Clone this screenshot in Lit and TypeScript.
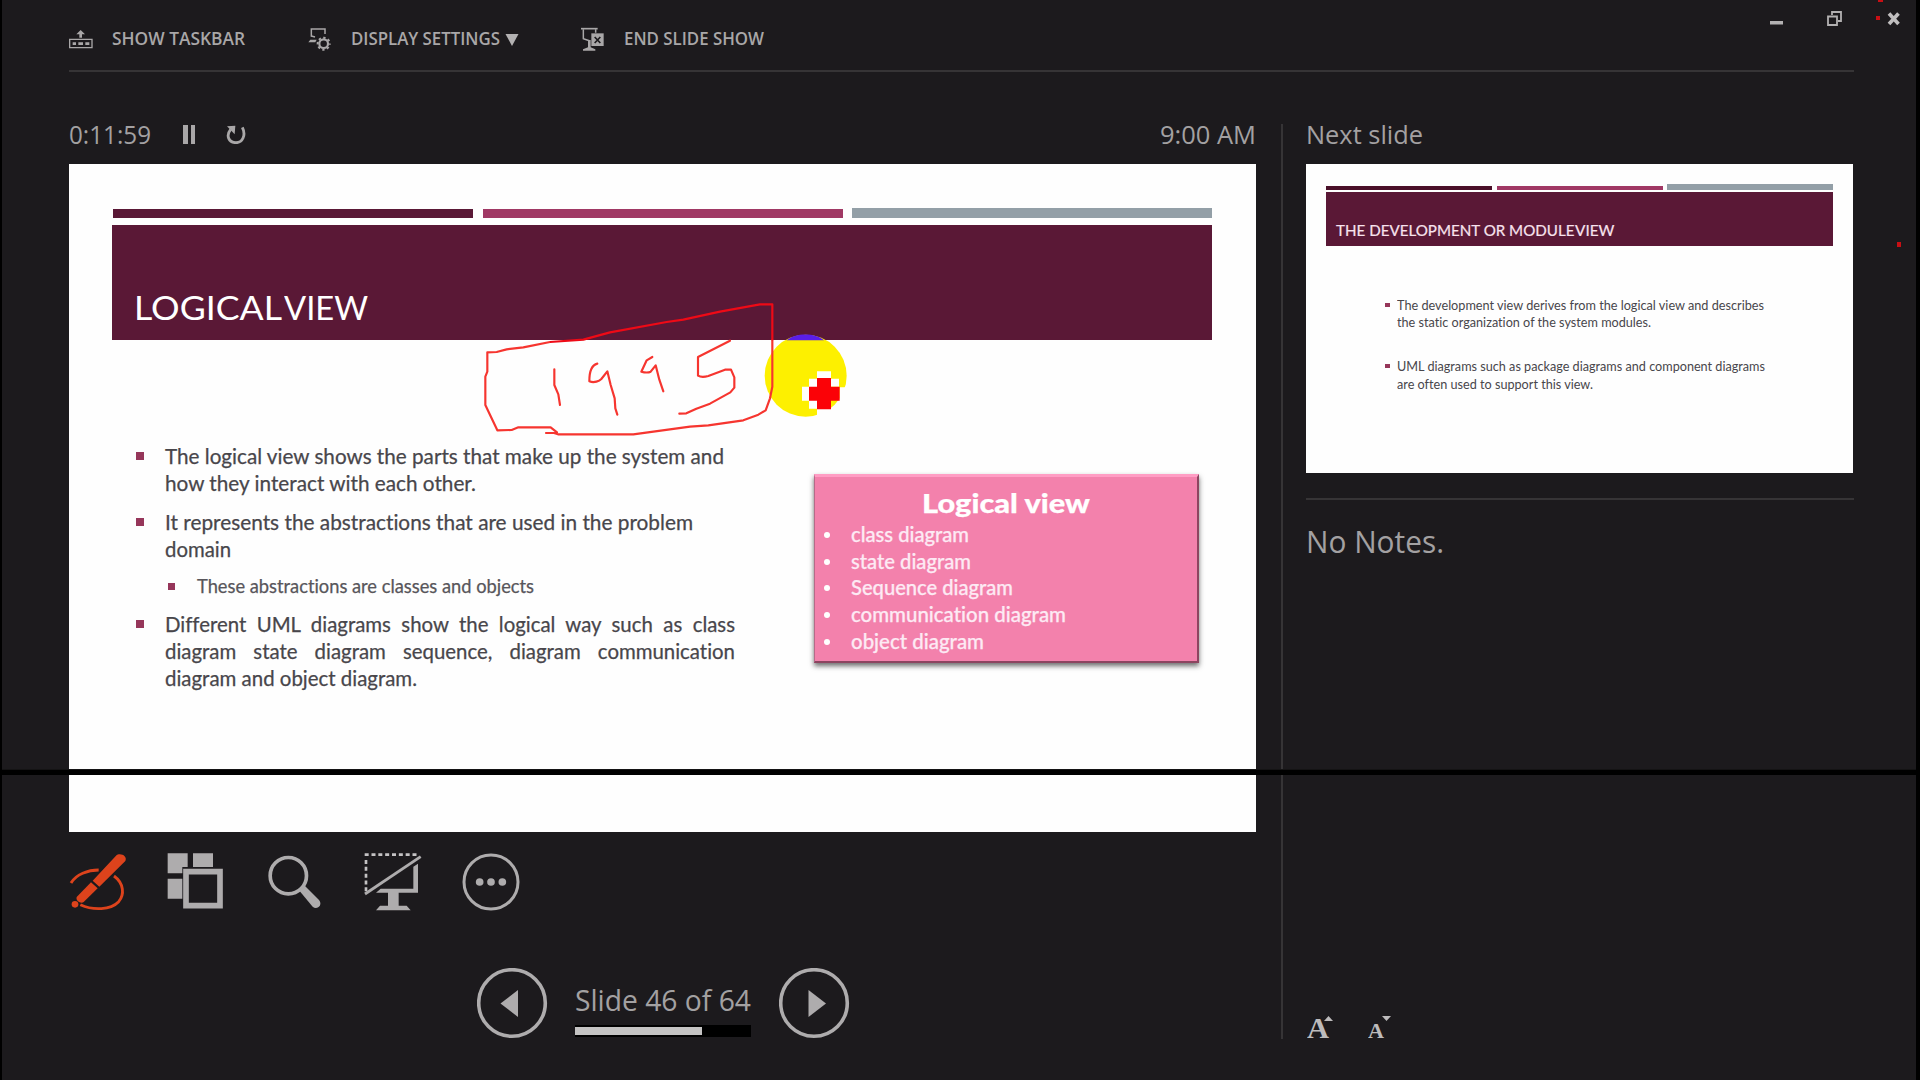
import { LitElement, html, css, svg } from "lit";
import { customElement, property } from "lit/decorators.js";

/** One line of text, stretched horizontally so that it fills its width. */
@customElement("fit-text")
class FitText extends LitElement {
  @property() text = "";
  @property({ type: Number }) width = 100;
  /** When set, glyphs keep this scale and the word gaps take up the rest. */
  @property({ type: Number }) glyph = 0;

  static styles = css`
    :host {
      display: block;
      flex: none;
      white-space: nowrap;
      font-variant-ligatures: none;
    }
    .run {
      display: inline-block;
      transform-origin: 0 50%;
      vertical-align: top;
    }
  `;

  updated() {
    const run = this.renderRoot.querySelector(".run") as HTMLElement;
    this.style.width = `${this.width}px`;
    run.style.transform = "none";
    run.style.wordSpacing = "0";
    const natural = run.getBoundingClientRect().width;
    if (this.glyph) {
      const gaps = this.text.split(" ").length - 1;
      run.style.wordSpacing = `${(this.width / this.glyph - natural) / gaps}px`;
      run.style.transform = `scaleX(${this.glyph})`;
    } else {
      run.style.transform = `scaleX(${this.width / natural})`;
    }
  }

  render() {
    return html`<span class="run">${this.text}</span>`;
  }
}

const line = (text: string, width: number, cls = "", glyph = 0) =>
  html`<fit-text class=${cls} .text=${text} .width=${width} .glyph=${glyph}></fit-text>`;

const icons = {
  taskbar: svg`
    <path d="M29 58H96V83H29Z" fill="none" stroke="#a9a7a8" stroke-width="4"/>
    <path d="M38 67h10v8h-10zM55 67h14v8h-14zM76 67h12v8h-12z" fill="#a9a7a8"/>
    <path d="M62 30L75 43H66V53H58V43H49Z" fill="#a9a7a8"/>`,
  display: svg`
    <path d="M31 50V27H72V42" fill="none" stroke="#a9a7a8" stroke-width="4.5"/>
    <path d="M31 48L42 51" stroke="#a9a7a8" stroke-width="4"/>
    <path d="M28 59H47L43 67H22Z" fill="#a9a7a8"/>
    <circle cx="68" cy="71" r="13" fill="none" stroke="#a9a7a8" stroke-width="6.5"/>
    <circle cx="68" cy="71" r="18" fill="none" stroke="#a9a7a8" stroke-width="6" stroke-dasharray="7 7.14" stroke-dashoffset="3.5"/>`,
  end: svg`
    <path d="M843 26H893" stroke="#a9a7a8" stroke-width="5"/>
    <path d="M850 28V56L868 62M887 28V38" fill="none" stroke="#a9a7a8" stroke-width="4.5"/>
    <path d="M864 60H872V82L886 88V92H849V88L864 82Z" fill="#a9a7a8"/>
    <path d="M874 40H911V78H874Z" fill="#a9a7a8"/>
    <path d="M884 51L901 69M901 51L884 69" stroke="#1c1a1d" stroke-width="5"/>`,
  reload: svg`
    <path d="M549 322C561 346 549 368 530 368C508 368 499 347 514 328" fill="none" stroke="#a9a7a8" stroke-width="8.5"/>
    <path d="M503 319L528 317L526 343Z" fill="#a9a7a8"/>`,
  pen: svg`
    <path d="M93 369C108 343 144 330 176 330M222 348C252 370 254 404 236 425C212 450 160 452 121 434" fill="none" stroke="#dd431c" stroke-width="8.5"/>
    <path d="M228 287C238 276 264 286 256 303L178 380L158 362Z" fill="#dd431c"/>
    <path d="M153 367L173 385L131 426C124 432 106 424 110 411Z" fill="#dd431c"/>
    <circle cx="105" cy="433" r="10" fill="#dd431c"/>`,
  grid: svg`
    <path d="M383 280H443V321H427V340H383ZM459 280H519V321H459ZM383 356H427V416H383Z" fill="#aeacad"/>
    <path d="M438 335H540V437H438Z" fill="none" stroke="#aeacad" stroke-width="17"/>`,
  zoom: svg`
    <circle cx="745" cy="347" r="54.5" fill="none" stroke="#aeacad" stroke-width="11"/>
    <path d="M777 391L792 375L837 420C850 436 830 451 818 440Z" fill="#aeacad"/>`,
  screen: svg`
    <path d="M974 284H1132" stroke="#c4c2c3" stroke-width="8" stroke-dasharray="12 8.5"/>
    <path d="M978 300V396" stroke="#c4c2c3" stroke-width="8" stroke-dasharray="12 8.5"/>
    <path d="M975 402L1142 290" stroke="#aeacad" stroke-width="8.5"/>
    <path d="M1120 320L1134 311V398H1076V437H1100L1112 451H1008L1020 437H1044V398H1008L1022 386H1120Z" fill="#aeacad"/>`,
  more: svg`
    <circle cx="1353" cy="366" r="81" fill="none" stroke="#aeacad" stroke-width="9"/>
    <circle cx="1319" cy="366" r="11.5" fill="#aeacad"/><circle cx="1353" cy="366" r="11.5" fill="#aeacad"/><circle cx="1387" cy="366" r="11.5" fill="#aeacad"/>`,
};

const icon = (shape: unknown, cls: string, box: string) =>
  html`<svg class=${cls} viewBox=${box}>${shape}</svg>`;

@customElement("app-root")
class AppRoot extends LitElement {
  static styles = css`
    :host {
      display: block;
      width: 1920px;
      height: 1080px;
      overflow: hidden;
    }
    * {
      box-sizing: border-box;
    }
    svg {
      display: block;
      flex: none;
    }
    .app {
      position: relative;
      width: 1920px;
      height: 1080px;
      background: #1c1a1d;
      border-left: 2px solid #000;
      border-right: 4px solid #000;
      padding-left: 67px;
      font-family: "Open Sans", "Noto Sans", sans-serif;
      color: #a3a1a2;
      overflow: hidden;
    }
    .header {
      display: flex;
      justify-content: space-between;
      height: 70px;
    }
    .commands {
      display: flex;
      padding-top: 26px;
      height: 53px;
    }
    .command {
      display: flex;
      font-size: 18px;
      font-weight: 600;
      line-height: 25px;
      color: #a9a7a8;
    }
    .c-icon {
      width: 24px;
      height: 24px;
      margin-top: 1px;
    }
    .c-text {
      margin-left: 19px;
    }
    .command + .command {
      margin-left: 63px;
    }
    .command.last {
      margin-left: 62px;
    }
    .caret {
      width: 14px;
      height: 12px;
      margin: 8px 0 0 5px;
    }
    .window {
      display: flex;
      width: 146px;
      height: 40px;
    }
    .win-icons {
      width: 146px;
      height: 40px;
    }
    .rule {
      height: 2px;
      width: 1785px;
      background: #363436;
    }
    .main {
      display: flex;
      height: 1008px;
      padding-top: 44px;
    }
    .left {
      width: 1187px;
    }
    .status {
      display: flex;
      height: 36px;
      line-height: 36px;
      font-size: 26px;
    }
    .pause {
      display: flex;
      gap: 3px;
      margin: 9px 0 0 32px;
      width: 12px;
      height: 19px;
    }
    .pause i {
      width: 4.5px;
      background: #a9a7a8;
    }
    .reload {
      width: 20px;
      height: 20px;
      margin: 8px 0 0 31px;
    }
    .clock {
      margin-left: auto;
    }
    .slide {
      margin-top: 12px;
      width: 1187px;
      height: 668px;
      padding: 44px 44px 0 43px;
      background: #fefefe;
      font-family: Lato, sans-serif;
      color: #48464b;
    }
    .bars {
      display: grid;
      grid-template-columns: 360px 360px 360px;
      column-gap: 9.5px;
      padding-left: 1px;
      align-items: end;
      height: 10px;
    }
    .bar {
      height: 9px;
    }
    .b1 {
      background: #5a1836;
    }
    .b2 {
      background: #a03864;
    }
    .b3 {
      height: 10px;
      background: #939fa7;
    }
    .banner {
      display: flex;
      margin-top: 7px;
      height: 115px;
      padding: 62px 0 0 22px;
      background: #5a1836;
      color: #fff;
      font-size: 33px;
      line-height: 40px;
    }
    .view {
      margin-left: 2px;
    }
    .content {
      display: flex;
    }
    .points {
      padding: 103px 0 0 24px;
      width: 702px;
      font-size: 20.6px;
      line-height: 26.8px;
      -webkit-text-stroke: 0.25px currentColor;
    }
    .point {
      display: grid;
      grid-template-columns: 29px 1fr;
      margin-bottom: 12.6px;
    }
    .point::before {
      content: "";
      width: 8px;
      height: 8px;
      margin-top: 9px;
      background: #96365a;
    }
    .point.sub {
      margin: -2.4px 0 11.4px 32px;
      font-size: 18.6px;
      color: #58565b;
    }
    .point.sub::before {
      width: 7px;
      height: 7px;
      margin-top: 10px;
    }
    .card {
      margin-top: 134px;
      width: 385px;
      height: 189px;
      padding: 11px 0 0 9px;
      background: #f381ac;
      color: #fdeaf4;
      border-top: 3px solid #ff9dc4;
      border-bottom: 2px solid #8c4560;
      border-right: 2px solid #8c4560;
      border-left: 1px solid #b76a88;
      box-shadow: 0 3px 5px rgba(30, 30, 30, 0.65);
      font-size: 20.4px;
      font-weight: 500;
      line-height: 26.8px;
      -webkit-text-stroke: 0.25px currentColor;
    }
    .card-title {
      margin: 0 0 2.8px 98px;
      color: #fff;
      font-size: 27px;
      font-weight: 900;
      line-height: 30px;
    }
    .item {
      display: flex;
    }
    .item::before {
      content: "";
      width: 6px;
      height: 6px;
      margin: 11px 21px 0 0;
      border-radius: 50%;
      background: #fff;
    }
    .tools {
      display: flex;
      gap: 38px;
      margin-top: 20px;
    }
    .tool {
      width: 60px;
      height: 60px;
    }
    .nav {
      display: flex;
      padding: 56px 0 0 408px;
    }
    .round {
      width: 72px;
      height: 72px;
    }
    .pager {
      width: 176px;
      margin: 13px 28px 0 26px;
      font-size: 28.5px;
      line-height: 38px;
    }
    .track {
      display: flex;
      align-items: center;
      height: 12px;
      margin-top: 6px;
      background: #000;
    }
    .fill {
      height: 8px;
      background: #c4c3c3;
    }
    .divider {
      width: 2px;
      height: 915px;
      margin: 8px 23px 0 25px;
      background: #363436;
    }
    .right {
      width: 548px;
    }
    .thumb {
      margin-top: 12px;
      width: 547px;
      height: 309px;
      padding: 20px 20px 0 20px;
      background: #fefefe;
      font-family: Lato, sans-serif;
      font-size: 14px;
      line-height: 17.2px;
      color: #48464b;
    }
    .thumb .bars {
      grid-template-columns: 166px 166px 166px;
      column-gap: 4.5px;
      padding: 0;
      height: 6px;
    }
    .thumb .bar {
      height: 4px;
    }
    .thumb .b1 {
      background: #4a1029;
    }
    .thumb .b3 {
      height: 6px;
    }
    .thumb .banner {
      margin-top: 2px;
      height: 54px;
      padding: 28px 0 0 10px;
      font-size: 16px;
      line-height: 20px;
      color: #f8e3ee;
      -webkit-text-stroke: 0.2px currentColor;
    }
    .thumb .view {
      margin-left: 0;
    }
    .thumb .point {
      grid-template-columns: 12px 1fr;
      margin: 0 0 27.4px 59px;
    }
    .thumb .point::before {
      width: 5px;
      height: 4px;
      margin-top: 7px;
    }
    .thumb .first {
      padding-top: 49.5px;
    }
    .note-rule {
      margin-top: 25px;
      height: 2px;
      background: #363436;
    }
    .notes {
      margin: 21px 0 0 0;
      font-size: 31px;
      line-height: 40px;
    }
    .sizes {
      display: flex;
      margin-top: 449px;
      padding-left: 1px;
      font-family: "Liberation Serif", serif;
      font-weight: 700;
      color: #bdbbbc;
      line-height: 36px;
    }
    .big {
      font-size: 30px;
    }
    .small {
      font-size: 22px;
      padding-top: 3px;
      margin-left: 35px;
    }
    .tri {
      width: 9px;
      height: 5px;
      margin: 6px 0 0 -5px;
    }
    .small-tri {
      margin-left: -2px;
    }
    .seam {
      position: absolute;
      left: -2px;
      top: 769px;
      width: 1920px;
      height: 6px;
      background: #000;
      border-top: 1px solid #141314;
    }
    .ink {
      position: absolute;
      left: 458px;
      top: 280px;
      width: 420px;
      height: 180px;
    }
    .specks {
      position: absolute;
      left: 1868px;
      top: 0;
      width: 40px;
      height: 260px;
    }
  `;

  private slide() {
    return html`<div class="slide">
      <div class="bars"><div class="bar b1"></div><div class="bar b2"></div><div class="bar b3"></div></div>
      <div class="banner">${line("LOGICAL", 148)}${line("VIEW", 84, "view")}</div>
      <div class="content">
        <div class="points">
          <div class="point"><div>
            ${line("The logical view shows the parts that make up the system and", 559)}
            ${line("how they interact with each other.", 311)}
          </div></div>
          <div class="point"><div>
            ${line("It represents the abstractions that are used in the problem", 528)}
            ${line("domain", 66)}
          </div></div>
          <div class="point sub"><div>${line("These abstractions are classes and objects", 337)}</div></div>
          <div class="point"><div>
            ${line("Different UML diagrams show the logical way such as class", 570, "", 0.99)}
            ${line("diagram state diagram sequence, diagram communication", 570, "", 0.99)}
            ${line("diagram and object diagram.", 252)}
          </div></div>
        </div>
        <div class="card">
          ${line("Logical view", 168, "card-title")}
          ${[
            ["class diagram", 118],
            ["state diagram", 120],
            ["Sequence diagram", 162],
            ["communication diagram", 215],
            ["object diagram", 133],
          ].map(([t, w]) => html`<div class="item">${line(t as string, w as number)}</div>`)}
        </div>
      </div>
    </div>`;
  }

  private nextSlide() {
    return html`<div class="thumb">
      <div class="bars"><div class="bar b1"></div><div class="bar b2"></div><div class="bar b3"></div></div>
      <div class="banner">${line("THE DEVELOPMENT OR MODULE", 238.5)}${line("VIEW", 39.5, "view")}</div>
      <div class="first">
        <div class="point"><div>
          ${line("The development view derives from the logical view and describes", 367)}
          ${line("the static organization of the system modules.", 254)}
        </div></div>
        <div class="point"><div>
          ${line("UML diagrams such as package diagrams and component diagrams", 368)}
          ${line("are often used to support this view.", 196)}
        </div></div>
      </div>
    </div>`;
  }

  render() {
    return html`<div class="app">
      <div class="header">
        <div class="commands">
          <div class="command">${icon(icons.taskbar, "c-icon", "27 21 72 72")}${line("SHOW TASKBAR", 133, "c-text")}</div>
          <div class="command">
            ${icon(icons.display, "c-icon", "21 21 72 72")}${line("DISPLAY SETTINGS", 149, "c-text")}
            <svg class="caret" viewBox="0 0 14 12"><path d="M0.5 0H13.5L7 12Z" fill="#b3b1b2" /></svg>
          </div>
          <div class="command last">${icon(icons.end, "c-icon", "843 21 72 72")}${line("END SLIDE SHOW", 140, "c-text")}</div>
        </div>
        <div class="window">
          <svg class="win-icons" viewBox="1770 0 146 40">
            <path d="M1770 21H1783V24.5H1770Z" fill="#b3b1b2" />
            <path d="M1832 15V12H1841V21H1838M1828 16.5H1837V25H1828Z" fill="none" stroke="#b3b1b2" stroke-width="1.8" />
            <path d="M1889 13.5L1898.5 24M1898.5 13.5L1889 24" stroke="#c0bebf" stroke-width="3.6" />
          </svg>
        </div>
      </div>
      <div class="rule"></div>
      <div class="main">
        <div class="left">
          <div class="status">
            ${line("0:11:59", 82)}
            <div class="pause"><i></i><i></i></div>
            ${icon(icons.reload, "reload", "500 312 60 60")}
            ${line("9:00 AM", 96, "clock")}
          </div>
          ${this.slide()}
          <div class="tools">
            ${icon(icons.pen, "tool", "87 276 180 180")}
            ${icon(icons.grid, "tool", "381 276 180 180")}
            ${icon(icons.zoom, "tool", "675 276 180 180")}
            ${icon(icons.screen, "tool", "969 276 180 180")}
            ${icon(icons.more, "tool", "1263 276 180 180")}
          </div>
          <div class="nav">
            <svg class="round" viewBox="0 0 72 72">
              <circle cx="35" cy="35" r="33.3" fill="none" stroke="#aeacad" stroke-width="3.6" />
              <path d="M41 22V49L23.5 35.5Z" fill="#aeacad" />
            </svg>
            <div class="pager">
              ${line("Slide 46 of 64", 176)}
              <div class="track"><div class="fill" style="width:${(46 / 64) * 100}%"></div></div>
            </div>
            <svg class="round" viewBox="0 0 72 72">
              <circle cx="35" cy="35" r="33.3" fill="none" stroke="#aeacad" stroke-width="3.6" />
              <path d="M29.5 22V49L47 35.5Z" fill="#aeacad" />
            </svg>
          </div>
        </div>
        <div class="divider"></div>
        <div class="right">
          <div class="status">${line("Next slide", 117)}</div>
          ${this.nextSlide()}
          <div class="note-rule"></div>
          <div class="notes">${line("No Notes.", 138)}</div>
          <div class="sizes">
            ${line("A", 22, "big")}
            <svg class="tri" viewBox="0 0 9 5"><path d="M0 5H9L4.5 0Z" fill="#bdbbbc" /></svg>
            ${line("A", 16, "small")}
            <svg class="tri small-tri" viewBox="0 0 9 5"><path d="M0 0H9L4.5 5Z" fill="#bdbbbc" /></svg>
          </div>
        </div>
      </div>
      <div class="seam"></div>
      <svg class="ink" viewBox="0 0 1260 540">
        <circle cx="1037" cy="287" r="123" fill="#fdf000" />
        <path d="M980 181C1005 158 1067 158 1092 181Z" fill="#5a1ee8" />
        <path d="M1139 322H1175V420H1071V386H1139Z" fill="#fefefe" />
        <path d="M1071 274H1113V296H1137V320H1113V362H1071V386H1047V362H1071V320H1047V296H1071ZM1026 320H1071V362H1026Z" fill="#fefefe" />
        <path d="M1071 294H1113V320H1139V362H1113V388H1071V362H1047V320H1071Z" fill="#fb0207" />
        <g fill="none" stroke="#f6352f" stroke-width="6.5" stroke-linejoin="round" stroke-linecap="round">
          <path d="M270 186L190 202L140 208L110 216L82 217V275L76 290V375L112 451L155 450L175 442H272L291 457M258 459H282L294 463H520L690 440L745 436L850 421L895 404L917 391L930 355L937 320V181" />
          <path d="M283 268V315L295 343L300 375" />
          <path d="M412 251C395 255 388 276 388 304C403 310 418 303 424 297L442 274L452 315L464 355L466 385L472 404" />
          <path d="M577 231L560 241L544 275C558 279 566 278 572 275L587 256L598 299L610 334" />
          <path d="M810 182L714 231V287C724 293 731 292 745 288L795 269H813L823 292V323L811 337L750 371L709 386L679 400L658 401" />
        </g>
        <path d="M270 186L370 179L450 157L620 126L670 119L780 95L900 73H937V181" fill="none" stroke="#ee0a16" stroke-width="6.5" stroke-linejoin="round" />
      </svg>
      <svg class="specks" viewBox="1870 0 40 260">
        <path d="M1878 0H1883V2H1878ZM1876 16H1880V20H1876ZM1897 242H1901V247H1897Z" fill="#c80f14" />
      </svg>
    </div>`;
  }
}
